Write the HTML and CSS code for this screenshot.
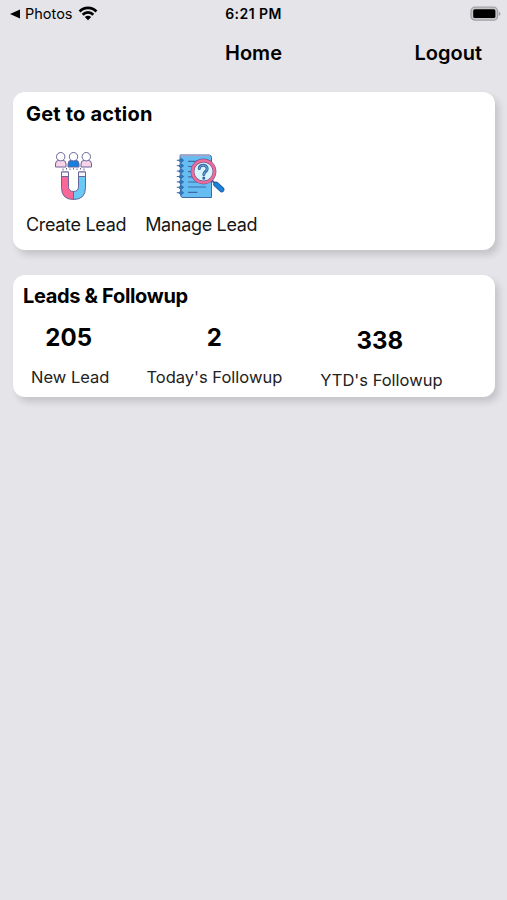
FILE: index.html
```
<!DOCTYPE html>
<html lang="en">
<head>
    <meta charset="UTF-8">
    <meta name="viewport" content="width=device-width, initial-scale=1.0">
    <title>Home</title>
    <link rel="stylesheet" href="styles.css">
</head>
<body>
    <div class="status-bar">
        <div class="status-left">
            <svg width="10" height="10" viewBox="0 0 10 10"><path d="M0 5L10 0.6V9.4Z"/></svg>
            <span class="back-app">Photos</span>
            <svg class="wifi" width="20" height="15" viewBox="0 0 20 15">
                <g fill="none" stroke="#000" stroke-width="2.8">
                    <path d="M1.6 5.4C6.3 0.6 13.7 0.6 18.4 5.4"/>
                    <path d="M4.7 8.7C7.7 5.7 12.3 5.7 15.3 8.7"/>
                </g>
                <path d="M6.8 11C8.6 9.4 11.4 9.4 13.2 11L10 14.3Z"/>
            </svg>
        </div>
        <span class="time">6:21 PM</span>
        <div class="status-right">
            <svg width="31" height="16" viewBox="0 0 31 16">
                <rect x="1" y="1.2" width="26.6" height="13" rx="4" fill="#c6c6c9" stroke="#a3a3a6" stroke-width="1.3"/>
                <rect x="3.2" y="3.3" width="22.2" height="8.8" rx="1.6"/>
                <path d="M28.8 5.5Q30.5 6.2 30.5 7.7Q30.5 9.2 28.8 9.9Z" fill="#a3a3a6"/>
            </svg>
        </div>
    </div>

    <div class="nav">
        <h1>Home</h1>
        <a href="#">Logout</a>
    </div>

    <div class="card actions">
        <h2>Get to action</h2>
        <div class="action-row">
            <a href="#" class="action create">
                <svg width="40" height="50" viewBox="0 0 40 50" stroke="#68659b" stroke-width="1">
                    <!-- people -->
                    <path d="M1.5 16V13Q1.5 9.3 5 9.3H8.5Q12 9.3 12 13V16Z" fill="#f9d3e7"/>
                    <circle cx="6.7" cy="5.7" r="4.2" fill="#fff"/>
                    <path d="M27 16V13Q27 9.3 30.5 9.3H34Q37.5 9.3 37.5 13V16Z" fill="#f9d3e7"/>
                    <circle cx="32.3" cy="5.7" r="4.2" fill="#fff"/>
                    <path d="M14 16V13Q14 9.3 17.5 9.3H21.5Q25 9.3 25 13V16Z" fill="#1780df"/>
                    <circle cx="19.5" cy="5.7" r="4.2" fill="#fff"/>
                    <path d="M9 17.5V19.5M12.5 17V18.5M16 17.5V19M19.5 17V18.5M23 17.5V19M26.5 17V18.5M30 17.5V19.5"/>
                    <!-- magnet -->
                    <path d="M7.5 21H14.5V35.5Q14.5 40.5 19.5 40.5V48.5Q7.5 48.5 7.5 36.5Z" fill="#fb6796"/>
                    <path d="M31.5 21H24.5V35.5Q24.5 40.5 19.5 40.5V48.5Q31.5 48.5 31.5 36.5Z" fill="#6bc9f5"/>
                    <path d="M7.5 21H14.5V25.5H7.5ZM24.5 21H31.5V25.5H24.5Z" fill="#f8f5fc"/>
                </svg>
                <span>Create Lead</span>
            </a>
            <a href="#" class="action manage">
                <svg width="50" height="50" viewBox="0 -1 50 50" stroke="#3e6aa2" stroke-width="1" stroke-linecap="round">
                    <!-- notebook -->
                    <path d="M4.5 3H33Q35.5 3 35.5 5.5V45.5H7Q4.5 45.5 4.5 43Z" fill="#65bdf2"/>
                    <path d="M5 3.5H33.5" stroke="#a9a0c9" stroke-width="1.5"/>
                    <path d="M12.5 9.3H22M12.5 14.5H17M12.5 19.7H17M12.5 24.8H18M12.5 30H24M12.5 35H29.5M12.5 40.3H21" stroke-width="1.2"/>
                    <g fill="#267ac6" stroke-width="1">
                        <path d="M1.2 8.3H3L5.2 6.3L7.6 8.3L5.2 10.5L3 8.7"/>
                        <path d="M1.2 13.7H3L5.2 11.7L7.6 13.7L5.2 15.9L3 14.1"/>
                        <path d="M1.2 19.1H3L5.2 17.1L7.6 19.1L5.2 21.3L3 19.5"/>
                        <path d="M1.2 24.5H3L5.2 22.5L7.6 24.5L5.2 26.7L3 24.9"/>
                        <path d="M1.2 29.9H3L5.2 27.9L7.6 29.9L5.2 32.1L3 30.3"/>
                        <path d="M1.2 35.3H3L5.2 33.3L7.6 35.3L5.2 37.5L3 35.7"/>
                        <path d="M1.2 40.7H3L5.2 38.7L7.6 40.7L5.2 42.9L3 41.1"/>
                    </g>
                    <!-- magnifier -->
                    <path d="M36 28.5L39 31.5" stroke="#535d98" stroke-width="2"/>
                    <path d="M40 32.3L45.7 37.6" stroke="#285291" stroke-width="5.4"/>
                    <path d="M40 32.3L45.7 37.6" stroke="#1783dd" stroke-width="4"/>
                    <circle cx="27.5" cy="19.5" r="11" fill="#d8f4fd" stroke="#77568f" stroke-width="3.8"/>
                    <circle cx="27.5" cy="19.5" r="11" fill="none" stroke="#ef6b99" stroke-width="2.5"/>
                    <path d="M23.3 16.5C23.3 12 31.2 12 31.2 16.8C31.2 19.7 27.8 19.3 27.8 22.6M27.8 26V26.2" fill="none" stroke="#38659f" stroke-width="3"/>
                    <path d="M23.3 16.5C23.3 12 31.2 12 31.2 16.8C31.2 19.7 27.8 19.3 27.8 22.6" fill="none" stroke="#71b7df" stroke-width="1"/>
                </svg>
                <span>Manage Lead</span>
            </a>
        </div>
    </div>

    <div class="card leads">
        <h2>Leads &amp; Followup</h2>
        <div class="stats">
            <div class="stat">
                <strong>205</strong>
                <span>New Lead</span>
            </div>
            <div class="stat today">
                <strong>2</strong>
                <span>Today's Followup</span>
            </div>
            <div class="stat ytd">
                <strong>338</strong>
                <span>YTD's Followup</span>
            </div>
        </div>
    </div>
</body>
</html>
```
FILE: styles.css
```
* {
    box-sizing: border-box;
}
body {
    font-family: Inter, "Liberation Sans", sans-serif;
    margin: 0;
    min-height: 900px;
    background-color: #e5e4e9;
    color: #000;
}
h1, h2 {
    margin: 0;
}
a {
    color: inherit;
    text-decoration: none;
}
svg {
    display: block;
}
.status-bar {
    display: grid;
    grid-template-columns: 1fr auto 1fr;
    align-items: center;
    height: 27px;
    padding: 0 10px;
}
.status-left {
    display: flex;
    align-items: center;
}
.back-app {
    margin-left: 5px;
    font-size: 14.5px;
}
.wifi {
    margin-left: 6px;
}
.time {
    font-size: 14px;
    font-weight: 600;
    letter-spacing: 0.45px;
}
.status-right {
    display: flex;
    justify-content: flex-end;
    margin-right: -4px;
}
.nav {
    display: grid;
    grid-template-columns: 1fr auto 1fr;
    align-items: center;
    height: 51px;
    padding: 0 25px;
    font-size: 20px;
    font-weight: 600;
}
.nav h1 {
    grid-column: 2;
    font-size: 20px;
    font-weight: 600;
}
.nav a {
    text-align: right;
}
.card {
    margin: 0 12px 0 13px;
    background: #fff;
    border-radius: 12px;
    box-shadow: 4px 5px 7px rgba(0, 0, 0, 0.14);
}
.card h2 {
    font-size: 20px;
    font-weight: 700;
    line-height: 24px;
}
.actions {
    height: 158px;
    margin-top: 14px;
    padding: 10px 13px;
}
.actions h2 {
    letter-spacing: 0.2px;
}
.action-row {
    display: flex;
    gap: 19px;
    margin-top: 25px;
}
.action {
    display: flex;
    flex-direction: column;
    align-items: center;
    gap: 12px;
    font-size: 18px;
    line-height: 24px;
    letter-spacing: -0.32px;
    color: #161616;
}
.create svg {
    margin-right: 5px;
}
.leads {
    height: 122px;
    margin-top: 24.5px;
    padding: 9.5px 10px;
}
.leads h2 {
    letter-spacing: -0.33px;
}
.stats {
    display: flex;
    margin-top: 15px;
    padding-left: 8px;
}
.stat {
    display: flex;
    flex-direction: column;
    align-items: center;
    gap: 14px;
}
.stat strong {
    margin-right: 3px;
    font-size: 24px;
    line-height: 30px;
}
.stat span {
    font-size: 16.5px;
    line-height: 20px;
    color: #222;
}
.today {
    margin-left: 37px;
}
.today strong {
    margin-right: 0;
}
.ytd {
    margin-left: 38px;
    padding-top: 3px;
}
```
